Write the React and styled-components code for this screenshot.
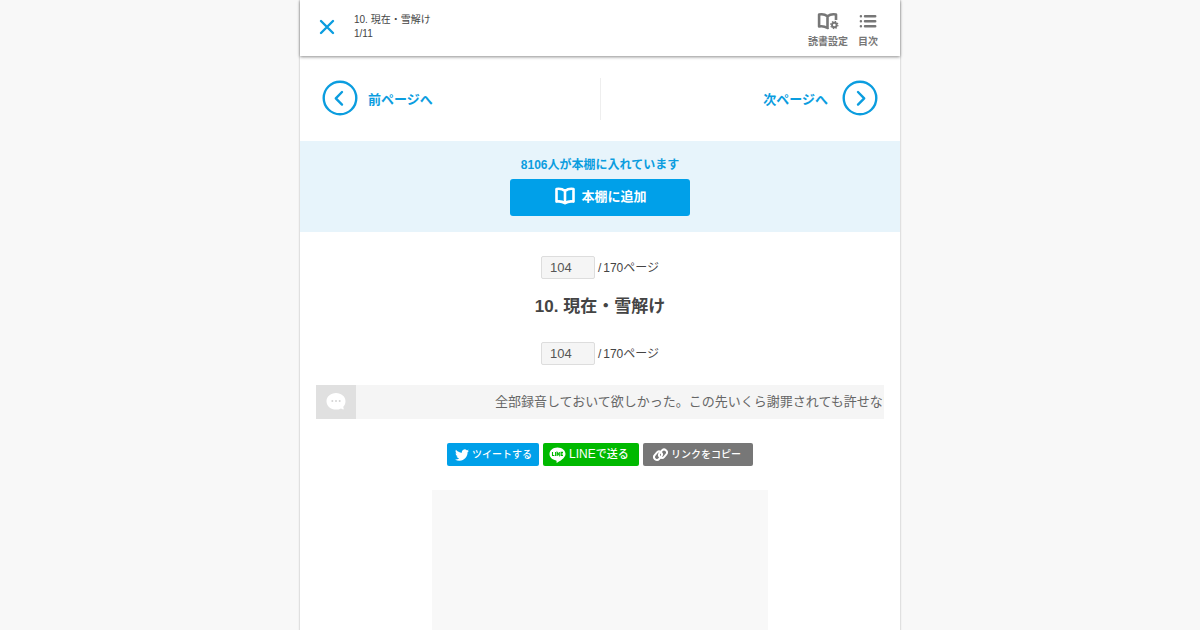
import React, { useState } from "react";
import styled, { createGlobalStyle } from "styled-components";

const blue = "#00a0e9";
const linkBlue = "#0b9ddf";

const GlobalStyle = createGlobalStyle`
  * { box-sizing: border-box; }
  html { scrollbar-width: none; }
  body {
    margin: 0;
    background: #f8f8f8;
    color: #444;
    font-family: "Liberation Sans", "Noto Sans CJK JP", sans-serif;
  }
  button, input { font-family: inherit; }
  a { text-decoration: none; }
`;

const Page = styled.div`
  max-width: 600px;
  min-height: 100vh;
  margin: 0 auto;
  background: #fff;
  box-shadow: 0 0 2px rgba(0, 0, 0, 0.3);
`;

const Header = styled.header`
  position: sticky;
  top: 0;
  display: flex;
  align-items: center;
  height: 56px;
  padding: 0 22px 2px 18px;
  background: #fff;
  box-shadow: 0 1px 3px rgba(0, 0, 0, 0.45);
`;

const IconButton = styled.button`
  display: flex;
  padding: 0;
  border: 0;
  background: none;
  cursor: pointer;
`;

const Heading = styled.div`
  flex: 1;
  margin-left: 18px;
  font-size: 10px;
  line-height: 14px;
`;

const Tools = styled.div`
  display: flex;
  gap: 10px;
  padding-top: 7px;
`;

const Tool = styled.button`
  display: flex;
  flex-direction: column;
  align-items: center;
  gap: 5px;
  padding: 0;
  border: 0;
  background: none;
  color: #777;
  font-size: 10px;
  font-weight: bold;
  line-height: 14px;
  cursor: pointer;
`;

const Pager = styled.nav`
  display: flex;
  padding: 22px 22px 21px;
`;

const PagerLink = styled.a`
  flex: 1;
  display: flex;
  align-items: center;
  justify-content: ${(p) => (p.$next ? "flex-end" : "flex-start")};
  gap: ${(p) => (p.$next ? 14 : 10)}px;
  height: 42px;
  padding-bottom: 2px;
  border-left: ${(p) => (p.$next ? "1px solid #eee" : "0")};
  color: ${linkBlue};
  font-size: 13px;
  font-weight: bold;
  line-height: 20px;
`;

const PagerText = styled.span`
  padding-top: 3px;
`;

const Shelf = styled.section`
  display: flex;
  flex-direction: column;
  align-items: center;
  padding: 16px;
  background: #e7f4fb;
`;

const ShelfCount = styled.p`
  margin: 0 0 6px;
  color: ${linkBlue};
  font-size: 12px;
  font-weight: bold;
  line-height: 16px;
`;

const ShelfButton = styled.button`
  display: flex;
  align-items: center;
  justify-content: center;
  gap: 6px;
  width: 180px;
  height: 37px;
  padding: 0 0 4px 2px;
  border: 0;
  border-radius: 3px;
  background: ${blue};
  color: #fff;
  font-size: 13px;
  font-weight: bold;
  cursor: pointer;
`;

const Content = styled.main`
  padding: 24px 16px 0;
`;

const PageLabel = styled.label`
  display: flex;
  align-items: center;
  justify-content: center;
  gap: 3px;
  font-size: 12px;
  line-height: 16px;
`;

const PageInput = styled.input`
  width: 54px;
  height: 23px;
  padding: 0 8px;
  border: 1px solid #ddd;
  border-radius: 2px;
  background: #f5f5f5;
  color: #555;
  font-size: 13px;
`;

const PageTotal = styled.span`
  padding-top: 1px;
`;

const Slash = styled.span`
  margin-right: 2px;
`;

const Title = styled.h1`
  margin: 15px 0 22px;
  font-size: 17px;
  line-height: 26px;
  text-align: center;
`;

const Ticker = styled.div`
  display: flex;
  height: 34px;
  margin-top: 20px;
  background: #f5f5f5;
  overflow: hidden;
`;

const TickerIcon = styled.div`
  flex: none;
  display: flex;
  align-items: center;
  justify-content: center;
  width: 40px;
  background: #e0e0e0;
`;

const TickerText = styled.p`
  flex: 1;
  margin: 0;
  padding-left: 139px;
  overflow: hidden;
  color: #666;
  font-size: 13px;
  line-height: 34px;
  white-space: nowrap;
`;

const Share = styled.div`
  display: flex;
  justify-content: center;
  gap: 4px;
  margin: 24px 0;
`;

const ShareButton = styled.button`
  display: flex;
  align-items: center;
  gap: ${(p) => p.$gap}px;
  width: ${(p) => p.$width}px;
  height: 23px;
  padding: 0 0 0 ${(p) => p.$inset}px;
  border: 0;
  border-radius: 2px;
  background: ${(p) => p.$color};
  color: #fff;
  font-family: "Noto Sans CJK JP", sans-serif;
  font-size: ${(p) => p.$size}px;
  font-weight: 500;
  line-height: 20px;
  white-space: nowrap;
  cursor: pointer;
`;

const ShareText = styled.span`
  padding-bottom: 2px;
`;

const LineName = styled.span`
  font-family: "Liberation Sans", sans-serif;
  font-size: 12px;
`;

const Banner = styled.div`
  width: 336px;
  max-width: 100%;
  height: 280px;
  margin: 0 auto;
  background: #f8f8f8;
`;

const CloseIcon = () => (
  <svg width="18" height="18" viewBox="0 0 18 18" stroke={linkBlue} strokeWidth="2.4" strokeLinecap="round" aria-hidden="true">
    <path d="M3 3 15 15M15 3 3 15" />
  </svg>
);

const CircleArrow = ({ next }) => (
  <svg width="36" height="36" viewBox="0 0 36 36" fill="none" stroke={linkBlue} strokeWidth="2.4" strokeLinecap="round" strokeLinejoin="round" aria-hidden="true">
    <circle cx="18" cy="18" r="16.3" />
    <path d={next ? "M16 12 22.2 18.3 16 24.6" : "M20 12 13.8 18.3 20 24.6"} />
  </svg>
);

const BookIcon = () => (
  <svg width="20" height="18" viewBox="0 0 20 18" fill="none" stroke="#fff" strokeWidth="2.6" strokeLinejoin="round" aria-hidden="true">
    <path d="M10 4C7.500 2 4.500 1.500 1.500 2v12.600c3-.6 6-.1 8.500 1.600 2.500-1.700 5.500-2.200 8.500-1.600V2C15.500 1.500 12.500 2 10 4ZM10 4v12" />
  </svg>
);

const SettingsIcon = () => (
  <svg width="22" height="18" viewBox="0 0 22 18" fill="none" stroke="#777" aria-hidden="true">
    <path d="M11.500 15.500 10.500 16C8 14.500 5 14 2.100 14.500V2.500C5 1.800 8 2.300 10.500 4.300 13 2.300 16 1.800 19 2.500V8M10.500 4.300V16" strokeWidth="2.600" strokeLinejoin="round" />
    <circle cx="17.300" cy="13" r="2.300" strokeWidth="1.900" />
    <circle cx="17.300" cy="13" r="3.600" strokeWidth="1.200" strokeDasharray="1.400 1.427" />
  </svg>
);

const ListIcon = () => (
  <svg width="18" height="18" viewBox="0 0 18 18" stroke="#777" strokeWidth="2.500" strokeLinecap="round" aria-hidden="true">
    <path d="M6 4.200H16.200M6 9.200H16.200M6 14.200H16.200M1.900 4.200h.01M1.900 9.200h.01M1.900 14.200h.01" />
  </svg>
);

const BubbleIcon = () => (
  <svg width="20" height="18" viewBox="0 0 20 18" aria-hidden="true">
    <path fill="#fff" d="M10 0C4.600 0 .500 3.600.500 8.300s4.100 8.300 9.500 8.300c1.900 0 3.600-.4 5-1.200 1 .7 2 .9 3.100.9-.6-.8-.8-1.600-.8-2.600 1.500-1.400 2.200-3.200 2.200-5.400C19.500 3.600 15.400 0 10 0Z" />
    <g fill="#d4d4d4"><circle cx="6.300" cy="8" r="1" /><circle cx="10" cy="8" r="1" /><circle cx="13.700" cy="8" r="1" /></g>
  </svg>
);

const BirdIcon = () => (
  <svg width="14" height="14" viewBox="0 0 24 24" fill="#fff" aria-hidden="true">
    <path d="M23.950 4.570a10 10 0 0 1-2.820.770 4.960 4.960 0 0 0 2.160-2.720c-.950.550-2.010.960-3.130 1.180a4.920 4.920 0 0 0-8.380 4.480C7.690 8.090 4.070 6.130 1.640 3.160a4.820 4.820 0 0 0-.670 2.480c0 1.710.870 3.210 2.190 4.100a4.900 4.900 0 0 1-2.230-.620v.060a4.920 4.920 0 0 0 3.950 4.830 5 5 0 0 1-2.210.080 4.940 4.940 0 0 0 4.600 3.420A9.870 9.870 0 0 1 0 19.540a14 14 0 0 0 7.550 2.210c9.050 0 14-7.500 14-13.980 0-.210 0-.420-.020-.630a9.940 9.940 0 0 0 2.420-2.570Z" />
  </svg>
);

const LineIcon = () => (
  <svg width="17" height="16" viewBox="0 0 17 16" aria-hidden="true">
    <path fill="#fff" d="M8.500.500C4 .500.500 3.400.500 7c0 3.200 2.800 5.800 6.600 6.400.7.200.5.700.4 2.100 0 .3.300.4.600.2C10.500 14.400 16.500 11 16.500 7 16.500 3.400 13 .500 8.500.500Z" />
    <path fill="none" stroke="#00b900" strokeWidth="1.100" d="M3.500 4.900v3.600h1.900M6.600 4.900v4.100M8.200 9V5.500L10.300 8.400V4.900M14 5.400h-1.900v3.100H14M12.100 7H13.800" />
  </svg>
);

const ChainIcon = () => (
  <svg width="15" height="14" viewBox="0 0 15 14" fill="none" stroke="#fff" strokeWidth="2" aria-hidden="true">
    <rect x="-4.500" y="-2.900" width="9" height="5.800" rx="2.900" transform="translate(5 7.700) rotate(-50)" />
    <rect x="-4.500" y="-2.900" width="9" height="5.800" rx="2.900" transform="translate(10 5.700) rotate(-50)" />
  </svg>
);

function PageJump({ id }) {
  const [value, setValue] = useState("104");
  return (
    <PageLabel htmlFor={id}>
      <PageInput id={id} value={value} onChange={(e) => setValue(e.target.value)} />
      <PageTotal><Slash>/</Slash>170ページ</PageTotal>
    </PageLabel>
  );
}

export default function App() {
  return (
    <>
      <GlobalStyle />
      <Page>
        <Header>
          <IconButton aria-label="閉じる"><CloseIcon /></IconButton>
          <Heading>
            <div>10. 現在・雪解け</div>
            <div>1/11</div>
          </Heading>
          <Tools>
            <Tool><SettingsIcon />読書設定</Tool>
            <Tool><ListIcon />目次</Tool>
          </Tools>
        </Header>
        <Pager>
          <PagerLink href="#prev"><CircleArrow /><PagerText>前ページへ</PagerText></PagerLink>
          <PagerLink href="#next" $next><PagerText>次ページへ</PagerText><CircleArrow next /></PagerLink>
        </Pager>
        <Shelf>
          <ShelfCount>8106人が本棚に入れています</ShelfCount>
          <ShelfButton><BookIcon />本棚に追加</ShelfButton>
        </Shelf>
        <Content>
          <PageJump id="page-top" />
          <Title>10. 現在・雪解け</Title>
          <PageJump id="page-bottom" />
          <Ticker>
            <TickerIcon><BubbleIcon /></TickerIcon>
            <TickerText>全部録音しておいて欲しかった。この先いくら謝罪されても許せない</TickerText>
          </Ticker>
          <Share>
            <ShareButton $color={blue} $width={92} $inset={8} $gap={3} $size={10}><BirdIcon /><ShareText>ツイートする</ShareText></ShareButton>
            <ShareButton $color="#00b900" $width={96} $inset={6} $gap={3} $size={11}><LineIcon /><ShareText><LineName>LINE</LineName>で送る</ShareText></ShareButton>
            <ShareButton $color="#777" $width={110} $inset={10} $gap={3} $size={10}><ChainIcon /><ShareText>リンクをコピー</ShareText></ShareButton>
          </Share>
          <Banner />
        </Content>
      </Page>
    </>
  );
}
